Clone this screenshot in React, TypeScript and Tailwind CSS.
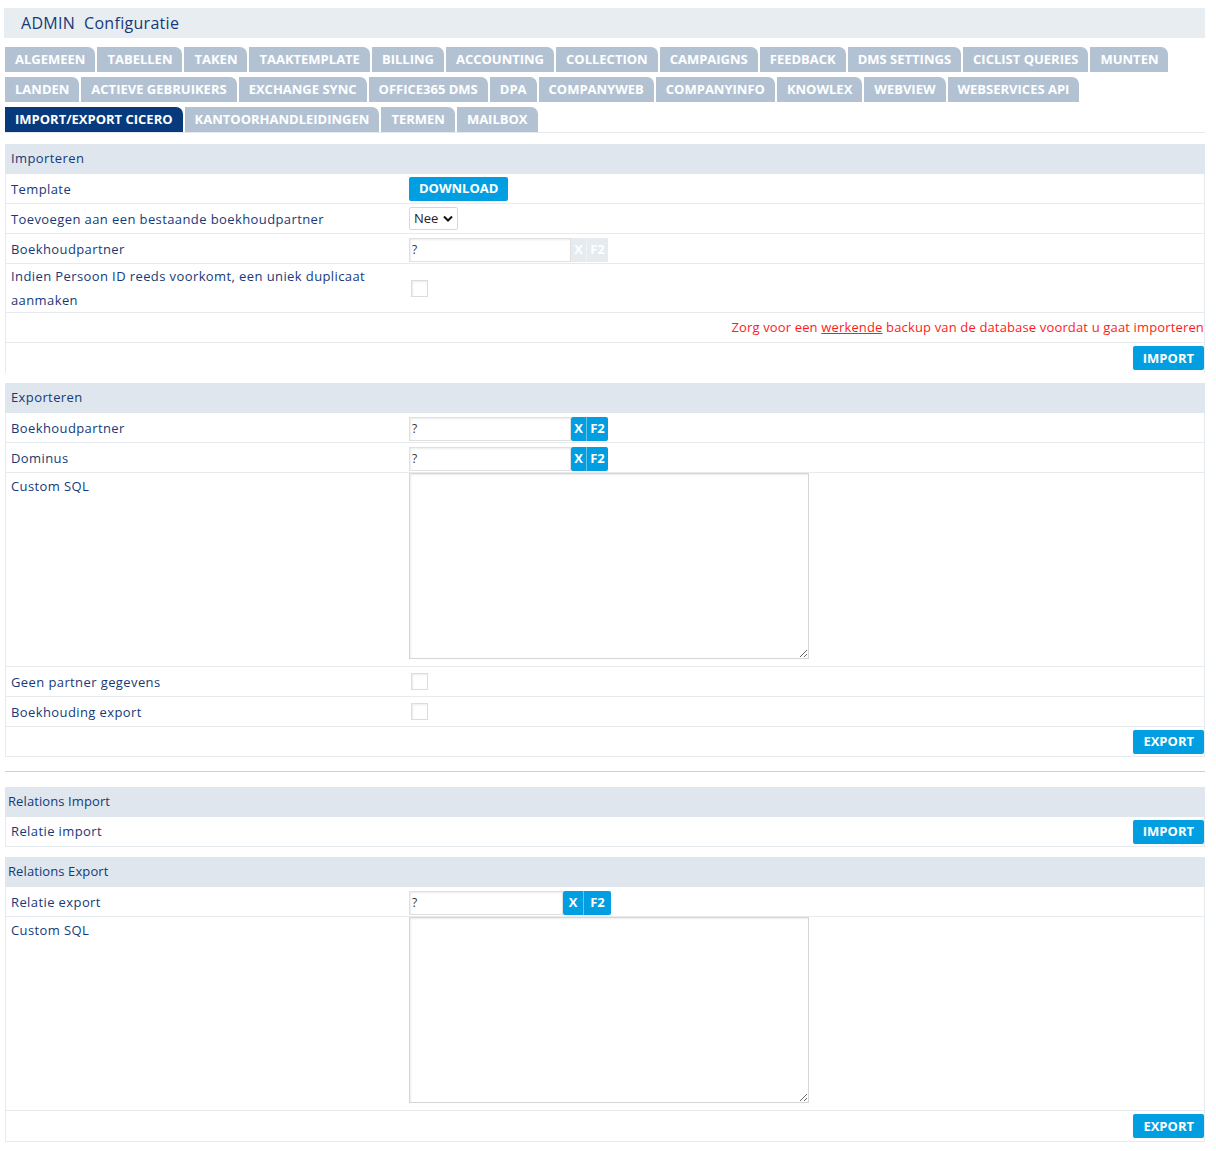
import React from "react";

const tabRows: string[][] = [
  ["ALGEMEEN", "TABELLEN", "TAKEN", "TAAKTEMPLATE", "BILLING", "ACCOUNTING", "COLLECTION", "CAMPAIGNS", "FEEDBACK", "DMS SETTINGS", "CICLIST QUERIES", "MUNTEN"],
  ["LANDEN", "ACTIEVE GEBRUIKERS", "EXCHANGE SYNC", "OFFICE365 DMS", "DPA", "COMPANYWEB", "COMPANYINFO", "KNOWLEX", "WEBVIEW", "WEBSERVICES API"],
  ["IMPORT/EXPORT CICERO", "KANTOORHANDLEIDINGEN", "TERMEN", "MAILBOX"],
];

const Tab: React.FC<{ label: string; active?: boolean }> = ({ label, active }) => (
  <div
    className={
      "h-[25px] px-[10px] flex items-center rounded-tr-[7px] text-[13px] font-bold text-white " +
      (active ? "bg-[#063a7c]" : "bg-[#b3c2d3]")
    }
  >
    {label}
  </div>
);

const SectionHeader: React.FC<{ title: string; tight?: boolean }> = ({ title, tight }) => (
  <div
    className={
      "h-[30px] bg-[#dfe6ee] flex items-center text-[13px] text-[#163a78] " +
      (tight ? "pl-[3px] font-medium tracking-[0.1px]" : "pl-[6px] tracking-[0.4px]")
    }
  >
    {title}
  </div>
);

const Row: React.FC<{ label?: React.ReactNode; children?: React.ReactNode; top?: boolean; h?: string }> = ({
  label,
  children,
  top,
  h,
}) => (
  <div
    className={
      "flex border-x border-b border-[#e6ebf0] " +
      (h ? h : "min-h-[30px]") +
      (top ? " items-start" : " items-center")
    }
  >
    <div className={"w-[403px] shrink-0 pl-[5px] pr-[8px] text-[13px] text-[#163a78] tracking-[0.4px] leading-[24px]" + (top ? " pt-[1px]" : "")}>
      {label}
    </div>
    <div className="flex-1 flex items-center">{children}</div>
  </div>
);

const BlueButton: React.FC<{ label: string }> = ({ label }) => (
  <button className="h-[24px] px-[10px] bg-[#019fe1] rounded-[2px] text-white text-[13px] font-bold leading-none">
    {label}
  </button>
);

const Lookup: React.FC<{ disabled?: boolean; wide?: boolean }> = ({ disabled, wide }) => (
  <div className="flex items-center mt-[3px]">
    <div
      className={
        "h-[24px] border border-[#e0e0e0] shadow-[inset_1px_1px_2px_rgba(0,0,0,0.08)] text-[12px] text-[#333] flex items-center pl-[2px] " +
        (wide ? "w-[154px]" : "w-[162px]")
      }
    >
      ?
    </div>
    <div
      className={
        "h-[24px] flex items-center text-[13px] font-bold text-white " +
        (disabled ? "bg-[#e6ebf0]" : "bg-[#019fe1] rounded-[2px]")
      }
    >
      <span className={"h-full flex items-center justify-center border-r border-white/40 " + (wide ? "w-[21px]" : "w-[16px]")}>X</span>
      <span className={"h-full flex items-center justify-center " + (wide ? "w-[27px]" : "w-[21px]")}>F2</span>
    </div>
  </div>
);

const Checkbox: React.FC = () => (
  <div className="ml-[2px] w-[17px] h-[17px] border border-[#dcdcdc] bg-white shadow-[inset_1px_1px_2px_rgba(0,0,0,0.08)]" />
);

const TextArea: React.FC<{ h: string }> = ({ h }) => (
  <textarea className={"w-[400px] border border-[#d6d6d6] shadow-[inset_1px_1px_2px_rgba(0,0,0,0.08)] bg-white " + h} />
);

export default function App() {
  return (
    <div className="min-h-screen bg-white pt-[8px] pb-[8px]" style={{ fontFamily: '"Open Sans", "Liberation Sans", sans-serif' }}>
      <div className="ml-[4px] w-[1201px] h-[30px] bg-[#e8edf2] flex items-center pl-[17px] text-[16px] tracking-[0.3px] text-[#163a78]">
        ADMIN&nbsp;&nbsp;Configuratie
      </div>

      <div className="ml-[5px] w-[1200px] mt-[9px]">
        <div className="flex flex-col gap-[5px] border-b border-[#e6ebf0]">
          {tabRows.map((row, i) => (
            <div key={i} className="flex gap-[2px]">
              {row.map((t) => (
                <Tab key={t} label={t} active={t === "IMPORT/EXPORT CICERO"} />
              ))}
            </div>
          ))}
        </div>

        {/* Importeren */}
        <div className="mt-[11px]">
          <SectionHeader title="Importeren" />
          <Row label="Template">
            <BlueButton label="DOWNLOAD" />
          </Row>
          <Row label="Toevoegen aan een bestaande boekhoudpartner">
            <div className="h-[23px] w-[49px] border border-[#d8d8d8] rounded-[2px] flex items-center justify-between px-[4px] text-[13px] text-[#222]">
              Nee
              <svg width="10" height="7" viewBox="0 0 10 7">
                <path d="M1 1.5 L5 5.5 L9 1.5" stroke="#111" strokeWidth="2" fill="none" />
              </svg>
            </div>
          </Row>
          <Row label="Boekhoudpartner">
            <Lookup disabled />
          </Row>
          <Row label="Indien Persoon ID reeds voorkomt, een uniek duplicaat aanmaken" h="min-h-[49px]">
            <Checkbox />
          </Row>
          <div className="h-[30px] border-x border-b border-[#e6ebf0] flex items-center justify-end text-[13px] tracking-[0.15px] text-[#ff1a1a]">
            Zorg voor een&nbsp;<span className="underline">werkende</span>&nbsp;backup van de database voordat u gaat importeren
          </div>
          <div className="h-[30px] border-x border-[#e6ebf0] flex items-center justify-end">
            <BlueButton label="IMPORT" />
          </div>
        </div>

        {/* Exporteren */}
        <div className="mt-[10px]">
          <SectionHeader title="Exporteren" />
          <Row label="Boekhoudpartner">
            <Lookup />
          </Row>
          <Row label="Dominus">
            <Lookup />
          </Row>
          <Row label="Custom SQL" top h="h-[194px]">
            <TextArea h="h-[186px]" />
          </Row>
          <Row label="Geen partner gegevens">
            <Checkbox />
          </Row>
          <Row label="Boekhouding export">
            <Checkbox />
          </Row>
          <div className="h-[30px] border-x border-b border-[#e6ebf0] flex items-center justify-end">
            <BlueButton label="EXPORT" />
          </div>
        </div>

        <div className="mt-[14px] border-t border-[#cfcfcf]" />

        {/* Relations Import */}
        <div className="mt-[15px]">
          <SectionHeader title="Relations Import" tight />
          <div className="h-[30px] border-x border-b border-[#e6ebf0] flex items-center justify-between">
            <span className="pl-[5px] text-[13px] text-[#163a78] tracking-[0.4px]">Relatie import</span>
            <BlueButton label="IMPORT" />
          </div>
        </div>

        {/* Relations Export */}
        <div className="mt-[10px]">
          <SectionHeader title="Relations Export" tight />
          <Row label="Relatie export">
            <Lookup wide />
          </Row>
          <Row label="Custom SQL" top h="h-[194px]">
            <TextArea h="h-[186px]" />
          </Row>
          <div className="h-[31px] border-x border-b border-[#e6ebf0] flex items-center justify-end">
            <BlueButton label="EXPORT" />
          </div>
        </div>
      </div>
    </div>
  );
}
